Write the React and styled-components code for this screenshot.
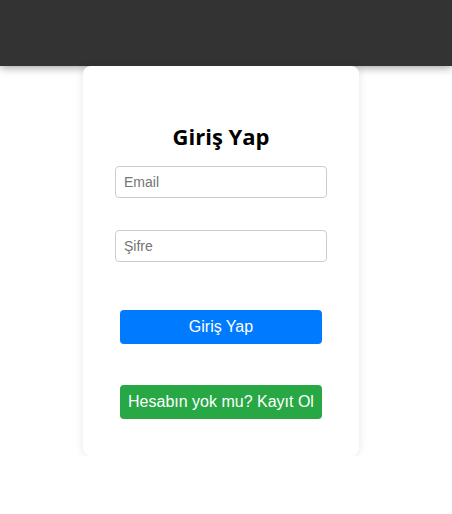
import React from 'react';
import styled, { createGlobalStyle } from 'styled-components';

const GlobalStyle = createGlobalStyle`
  body {
    margin: 0;
    background: #fff;
    font-family: "Liberation Sans", Arial, sans-serif;
  }
`;

const Header = styled.header`
  height: 66px;
  background: #333;
  box-shadow: 0 2px 8px rgba(0, 0, 0, 0.35);
`;

const Card = styled.div`
  position: relative;
  z-index: 1;
  width: 276px;
  box-sizing: border-box;
  margin-left: 83px;
  padding: 55px 32px 37px;
  background: #fff;
  border-radius: 8px;
  box-shadow: 0 0 10px rgba(0, 0, 0, 0.1);
  display: flex;
  flex-direction: column;
  align-items: center;
`;

const Title = styled.h2`
  margin: 0 0 15px;
  font-family: "Open Sans", "Liberation Sans", sans-serif;
  font-size: 22px;
  line-height: 30px;
  font-weight: 700;
  color: #000;
`;

const Input = styled.input`
  width: 100%;
  height: 32px;
  box-sizing: border-box;
  margin-bottom: ${p => p.$gap}px;
  padding: 0 8px;
  border: 1px solid #ccc;
  border-radius: 4px;
  font-family: "Liberation Sans", Arial, sans-serif;
  font-size: 14px;
  &::placeholder {
    color: #757575;
  }
`;

const Button = styled.button`
  width: 202px;
  height: 34px;
  margin-bottom: ${p => p.$gap || 0}px;
  border: none;
  border-radius: 4px;
  background: ${p => p.$bg};
  color: #fff;
  font-family: "Liberation Sans", Arial, sans-serif;
  font-size: 16px;
  padding: 0;
  cursor: pointer;
`;

export default function App() {
  return (
    <>
      <GlobalStyle />
      <Header />
      <Card>
        <Title>Giriş Yap</Title>
        <Input type="email" placeholder="Email" $gap={32} />
        <Input type="password" placeholder="Şifre" $gap={48} />
        <Button $bg="#007bff" $gap={41}>Giriş Yap</Button>
        <Button $bg="#28a745">Hesabın yok mu? Kayıt Ol</Button>
      </Card>
    </>
  );
}
